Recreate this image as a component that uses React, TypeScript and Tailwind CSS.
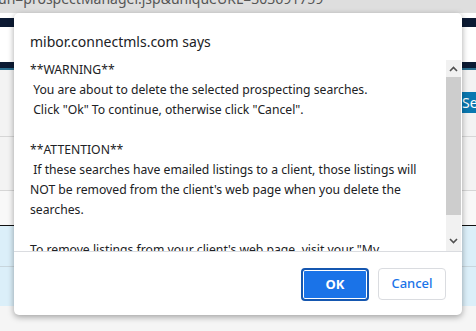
import React from "react";

const lines: string[] = [
  "**WARNING**",
  " You are about to delete the selected prospecting searches.",
  " Click \"Ok\" To continue, otherwise click \"Cancel\".",
  "",
  "**ATTENTION**",
  " If these searches have emailed listings to a client, those listings will",
  "NOT be removed from the client's web page when you delete the",
  "searches.",
  "",
  "To remove listings from your client's web page, visit your \"My",
];

export default function App() {
  return (
    <div
      className="relative w-[476px] h-[331px] overflow-hidden bg-[#f5f5f5]"
      style={{ fontFamily: "'Noto Sans', 'Open Sans', Arial, sans-serif" }}
    >
      {/* background page */}
      <div className="h-[13px] bg-[#dedede] overflow-hidden">
        <div className="text-[14px] leading-[16px] text-[#555] mt-[-9px] ml-[-2px] whitespace-nowrap">
          un=prospectManager.jsp&amp;uniqueURL=303691759
        </div>
      </div>
      <div className="h-[5px] bg-white" />
      <div className="h-[9px] bg-[#0c1a33]" />
      <div className="h-[35px] bg-white" />
      <div className="h-[6px] bg-[#0c1a33]" />
      <div className="h-[2px] bg-[#2b6e8e]" />
      <div className="h-[66px] bg-[#f3f3f3] flex justify-end items-start">
        <div className="mt-[22px] w-[14px] h-[21px] bg-[#0a78b0] overflow-hidden text-white text-[14px] leading-[21px] whitespace-nowrap">
          Sea
        </div>
      </div>
      <div className="h-[1px] bg-[#d6d6d6]" />
      <div className="h-[53px] bg-[#f3f3f3]" />
      <div className="h-[1px] bg-[#d6d6d6]" />
      <div className="h-[34px] bg-[#f8f8f8]" />
      <div className="h-[1px] bg-[#111]" />
      <div className="h-[40px] bg-[#dbeff9]" />
      <div className="h-[1px] bg-[#c8d6dd]" />
      <div className="h-[39px] bg-[#dbeff9]" />

      {/* dialog */}
      <div className="absolute left-[14px] top-[13px] w-[448px] h-[302px] bg-white rounded-[5px] shadow-[0_2px_6px_rgba(0,0,0,0.35)] flex flex-col overflow-hidden">
        <div className="pt-[19px] pl-[16px] h-[47px] text-[14px] leading-[20px] text-[#202124]">
          mibor.connectmls.com says
        </div>
        <div className="flex h-[191px]">
          <div className="flex-1 overflow-hidden pl-[16px] text-[12.2px] leading-[20px] text-[#202124] whitespace-pre">
            {lines.map((l, i) => (
              <div key={i} className="h-[20px]">
                {l}
              </div>
            ))}
          </div>
          <div className="w-[15px] mr-[1px] bg-[#f1f1f1] flex flex-col items-center">
            <div className="h-[17px] w-full flex items-center justify-center">
              <svg width="9" height="6" viewBox="0 0 9 6">
                <path d="M1 5 L4.5 1.5 L8 5" stroke="#505050" strokeWidth="1.6" fill="none" />
              </svg>
            </div>
            <div className="w-full h-[138px] bg-[#cdcdcd]" />
            <div className="flex-1" />
            <div className="h-[17px] w-full flex items-center justify-center mb-[2px]">
              <svg width="9" height="6" viewBox="0 0 9 6">
                <path d="M1 1 L4.5 4.5 L8 1" stroke="#505050" strokeWidth="1.6" fill="none" />
              </svg>
            </div>
          </div>
        </div>
        <div className="flex-1 border-t border-[#dadce0] flex justify-end items-start pt-[16px] pr-[16px] gap-[9px]">
          <button className="w-[68px] h-[33px] rounded-[4px] bg-[#1a73e8] text-white text-[13px] font-bold border-2 border-[#1557b0] shadow-[inset_0_0_0_1px_#ffffff]">
            OK
          </button>
          <button className="w-[68px] h-[32px] rounded-[4px] bg-white text-[#1a73e8] text-[13px] font-medium border border-[#dadce0]">
            Cancel
          </button>
        </div>
      </div>
    </div>
  );
}
